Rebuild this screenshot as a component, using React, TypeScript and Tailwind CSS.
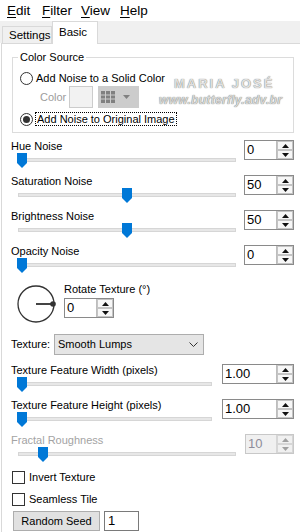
import React from 'react';

function Arrow({ up, disabled }: { up?: boolean; disabled?: boolean }) {
	const fill = disabled ? '#a0a0a0' : '#111';
	return (
		<div
			className={`flex-1 flex items-center justify-center border ${
				disabled ? 'border-[#d6d6d6] bg-[#f0f0f0]' : 'border-[#c4c4c4] bg-[#f7f7f7]'
			}`}
		>
			<svg width="7" height="4" viewBox="0 0 7 4">
				{up ? (
					<polygon points="0,4 7,4 3.5,0" fill={fill} />
				) : (
					<polygon points="0,0 7,0 3.5,4" fill={fill} />
				)}
			</svg>
		</div>
	);
}

function Spin({
	value,
	className,
	disabled,
}: {
	value: string;
	className: string;
	disabled?: boolean;
}) {
	return (
		<div
			className={`flex h-[20px] shrink-0 border ${
				disabled ? 'border-[#c8c8c8] bg-[#f0f0f0]' : 'border-[#8a8a8a] bg-white'
			} ${className}`}
		>
			<div
				className={`flex-1 border-r pl-[2px] text-[13px] leading-[18px] ${
					disabled
						? 'border-[#d6d6d6] text-[#8d8d9a]'
						: 'border-[#bdbdbd] text-black'
				}`}
			>
				{value}
			</div>
			<div className="flex w-[16px] flex-col">
				<Arrow up disabled={disabled} />
				<Arrow disabled={disabled} />
			</div>
		</div>
	);
}

function Slider({ pct, trackW }: { pct: number; trackW: string }) {
	// thumb centre runs from 4px in to 4px past the 210px mark
	const left = Math.round(pct * 210);
	return (
		<div className={`relative ml-[16px] h-[15px] ${trackW}`}>
			<div className="mt-[5px] h-[4px] border border-[#d6d6d6] bg-[#e7e7e7]" />
			<svg
				className="absolute top-0"
				style={{ left: left - 1 }}
				width="10"
				height="15"
				viewBox="0 0 10 15"
			>
				<path d="M0 0H10V10L5 15L0 10Z" fill="#0078d7" />
			</svg>
		</div>
	);
}

function SliderRow({
	label,
	value,
	pct,
	trackW = 'w-[218px]',
	spinW = 'w-[50px]',
	disabled,
}: {
	label: string;
	value: string;
	pct: number;
	trackW?: string;
	spinW?: string;
	disabled?: boolean;
}) {
	return (
		<div className="flex h-[35px] w-[292px] justify-between">
			<div className="flex flex-col">
				<div
					className={`h-[14px] pl-[9px] leading-[14px] ${
						disabled ? 'text-[#a3a3a3]' : 'text-black'
					}`}
				>
					{label}
				</div>
				<Slider pct={pct} trackW={trackW} />
			</div>
			<Spin value={value} className={`mt-[1px] ${spinW}`} disabled={disabled} />
		</div>
	);
}

function Radio({ checked }: { checked?: boolean }) {
	return (
		<div className="flex h-[13px] w-[13px] items-center justify-center rounded-full border border-[#333] bg-white">
			{checked && <div className="h-[7px] w-[7px] rounded-full bg-[#333]" />}
		</div>
	);
}

function Check({ label }: { label: string }) {
	return (
		<div className="flex h-[14px] items-center">
			<div className="ml-[10px] h-[13px] w-[13px] border border-[#333] bg-white" />
			<span className="ml-[4px] leading-[14px]">{label}</span>
		</div>
	);
}

function MenuItem({ first, rest, w }: { first: string; rest: string; w: string }) {
	return (
		<div className={w}>
			<span className="underline underline-offset-2">{first}</span>
			{rest}
		</div>
	);
}

export default function App() {
	return (
		<div className="flex h-[532px] w-[300px] flex-col overflow-hidden bg-white font-['Liberation_Sans',Arial,sans-serif] text-[11px] text-black">
			<div className="flex h-[21px] items-center pl-[7px] text-[13.5px] leading-[21px]">
				<MenuItem first="E" rest="dit" w="w-[35px]" />
				<MenuItem first="F" rest="ilter" w="w-[39px]" />
				<MenuItem first="V" rest="iew" w="w-[39px]" />
				<MenuItem first="H" rest="elp" w="w-[39px]" />
			</div>

			<div className="flex h-[22px] items-end bg-[#f0f0f0] pl-[2px]">
				<div className="h-[17px] w-[50px] border border-b-0 border-[#d9d9d9] bg-[#f0f0f0] pl-[6px] text-[11.5px] leading-[16px]">
					Settings
				</div>
				<div className="relative z-10 -mb-px h-[23px] w-[46px] border border-b-0 border-[#d9d9d9] bg-white pl-[6px] text-[11.5px] leading-[20px]">
					Basic
				</div>
			</div>

			<div className="ml-[1px] flex-1 border-l border-t border-[#d9d9d9]">
				<fieldset className="relative ml-[10px] mt-[6px] h-[83px] w-[282px] border border-[#dcdcdc]">
					<legend className="ml-[5px] px-[2px] leading-[14px]">Color Source</legend>
					<div className="mt-[7px] flex h-[14px] items-center pl-[7px]">
						<Radio />
						<span className="ml-[3px]">Add Noise to a Solid Color</span>
					</div>
					<div className="mt-[1px] flex h-[22px] items-center">
						<span className="ml-[27px] w-[29px] text-[#9c9c9c]">Color</span>
						<div className="h-[22px] w-[24px] border border-[#cccccc] bg-[#f2f2f2]" />
						<div className="ml-[5px] flex h-[22px] w-[41px] items-center bg-[#cccccc] pl-[3px]">
							<svg width="14" height="12" viewBox="0 0 14 12">
								<rect width="14" height="12" fill="#808080" />
								<path d="M4.5 0V12M9.5 0V12M0 4H14M0 8H14" stroke="#cccccc" strokeWidth="1" />
							</svg>
							<svg className="ml-[8px]" width="7" height="4" viewBox="0 0 7 4">
								<polygon points="0,0 7,0 3.5,4" fill="#808080" />
							</svg>
						</div>
					</div>
					<div className="mt-[4px] flex h-[14px] items-center pl-[7px]">
						<Radio checked />
						<span className="ml-[2px] border border-dotted border-black px-[1px] leading-[12px]">
							Add Noise to Original Image
						</span>
					</div>
					<div className="pointer-events-none absolute left-[161px] top-[10px] text-[13px] font-bold tracking-[2px] text-[#e0e0e0] [text-shadow:0_0_1px_#555]">
						MARIA JOSÉ
					</div>
					<div className="pointer-events-none absolute left-[146px] top-[27px] text-[12px] font-bold italic tracking-[0.3px] text-[#d8d8d8] [text-shadow:0_0_1px_#555]">
						www.butterfly.adv.br
					</div>
				</fieldset>

				<div className="mt-[6px] flex flex-col">
					<SliderRow label="Hue Noise" value="0" pct={0} />
					<SliderRow label="Saturation Noise" value="50" pct={0.5} />
					<SliderRow label="Brightness Noise" value="50" pct={0.5} />
					<SliderRow label="Opacity Noise" value="0" pct={0} />
				</div>

				<div className="flex h-[55px]">
					<svg className="ml-[14px] mt-[5px]" width="40" height="40" viewBox="0 0 40 40">
						<circle cx="20" cy="20" r="18" fill="none" stroke="#333" strokeWidth="1.3" />
						<line x1="20" y1="20" x2="37" y2="20" stroke="#444" strokeWidth="2" />
						<circle cx="37" cy="20" r="2.8" fill="#333" />
					</svg>
					<div className="ml-[8px] mt-[3px] flex flex-col">
						<div className="h-[14px] leading-[14px]">Rotate Texture (°)</div>
						<Spin value="0" className="mt-[2px] w-[50px]" />
					</div>
				</div>

				<div className="flex h-[20px] items-center">
					<span className="ml-[9px] w-[43px]">Texture:</span>
					<div className="flex h-[21px] w-[150px] items-center justify-between border border-[#adadad] bg-[#e5e5e5] pl-[3px] pr-[5px]">
						<span>Smooth Lumps</span>
						<svg width="9" height="5" viewBox="0 0 9 5">
							<path d="M0.5 0.5L4.5 4.5L8.5 0.5" fill="none" stroke="#333" strokeWidth="1" />
						</svg>
					</div>
				</div>

				<div className="mt-[9px] flex flex-col">
					<SliderRow
						label="Texture Feature Width (pixels)"
						value="1.00"
						pct={0}
						trackW="w-[194px]"
						spinW="w-[72px]"
					/>
					<SliderRow
						label="Texture Feature Height (pixels)"
						value="1.00"
						pct={0}
						trackW="w-[194px]"
						spinW="w-[72px]"
					/>
					<SliderRow label="Fractal Roughness" value="10" pct={0.1} spinW="w-[49px]" disabled />
				</div>

				<div className="mt-[2px]">
					<Check label="Invert Texture" />
				</div>
				<div className="mt-[8px]">
					<Check label="Seamless Tile" />
				</div>
				<div className="mt-[5px] flex h-[20px]">
					<div className="ml-[11px] flex h-[20px] w-[87px] items-center justify-center border border-[#adadad] bg-[#e1e1e1]">
						Random Seed
					</div>
					<div className="ml-[4px] h-[20px] w-[35px] border border-[#7a7a7a] pl-[3px] text-[13px] leading-[18px]">
						1
					</div>
				</div>
			</div>
		</div>
	);
}
